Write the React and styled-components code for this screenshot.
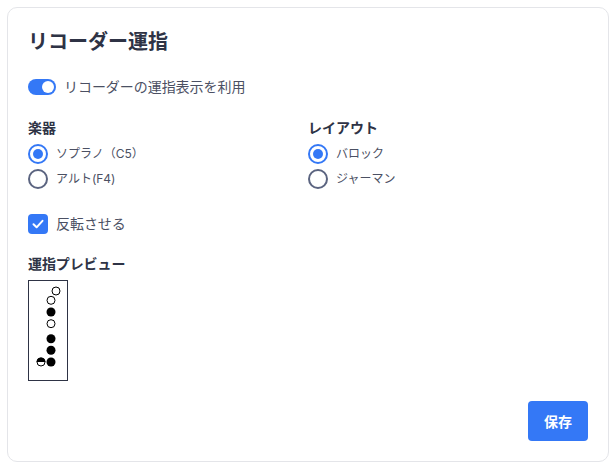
import React from "react";
import styled, { createGlobalStyle } from "styled-components";

const Global = createGlobalStyle`
  html, body { margin: 0; padding: 0; background: #fff; }
  body { font-family: Inter, "Noto Sans CJK JP", sans-serif; color: #2e3345; }
`;
const Page = styled.div`
  padding: 7px 7px 6px 7px;
  width: 616px;
  height: 468px;
  box-sizing: border-box;
`;
const Card = styled.div`
  box-sizing: border-box;
  width: 602px;
  height: 455px;
  border: 1px solid #e4e5e9;
  border-radius: 10px;
  padding: 20px;
  display: flex;
  flex-direction: column;
`;
const Title = styled.h2`
  margin: 0;
  font-size: 20px;
  line-height: 28px;
  font-weight: 700;
  color: #2e3345;
`;
const ToggleRow = styled.div`
  display: flex;
  align-items: center;
  gap: 8px;
  margin-top: 19px;
  height: 24px;
`;
const Track = styled.span`
  width: 28px;
  height: 16px;
  border-radius: 8px;
  background: #3478f6;
  display: flex;
  align-items: center;
  justify-content: flex-end;
  padding: 0 2px;
  box-sizing: border-box;
`;
const Knob = styled.span`
  width: 12px;
  height: 12px;
  border-radius: 50%;
  background: #fff;
`;
const OptionText = styled.span`
  font-size: 14px;
  line-height: 20px;
  letter-spacing: -0.05px;
  color: #4b5063;
`;
const Columns = styled.div`
  display: grid;
  grid-template-columns: 280px 1fr;
  margin-top: 19px;
`;
const Group = styled.div`
  display: flex;
  flex-direction: column;
`;
const GroupLabel = styled.div`
  font-size: 14px;
  line-height: 20px;
  font-weight: 700;
  color: #2e3345;
  margin-bottom: 3px;
`;
const RadioRow = styled.div`
  display: flex;
  align-items: center;
  gap: 8px;
  height: 25px;
`;
const RadioDot = styled.span`
  box-sizing: border-box;
  width: 20px;
  height: 20px;
  border-radius: 50%;
  border: 2px solid ${p => (p.$on ? "#3478f6" : "#5b6480")};
  display: flex;
  align-items: center;
  justify-content: center;
  &::after {
    content: "";
    width: 10px;
    height: 10px;
    border-radius: 50%;
    background: ${p => (p.$on ? "#3478f6" : "transparent")};
  }
`;
const SmallText = styled.span`
  font-size: 12px;
  line-height: 18px;
  color: #4b5063;
`;
const CheckRow = styled.div`
  display: flex;
  align-items: center;
  gap: 8px;
  margin-top: 23px;
  height: 20px;
`;
const CheckBox = styled.span`
  width: 20px;
  height: 20px;
  border-radius: 4px;
  background: #3478f6;
  display: flex;
  align-items: center;
  justify-content: center;
`;
const PreviewLabel = styled(GroupLabel)`
  margin-top: 20px;
  margin-bottom: 6px;
  letter-spacing: -0.1px;
`;
const Diagram = styled.svg`
  display: block;
  width: 40px;
  height: 101px;
`;
const Footer = styled.div`
  margin-top: auto;
  display: flex;
  justify-content: flex-end;
`;
const SaveButton = styled.button`
  width: 60px;
  height: 40px;
  border: 0;
  border-radius: 4px;
  background: #3478f6;
  color: #fff;
  font: 700 14px Inter, "Noto Sans CJK JP", sans-serif;
  padding: 0;
`;

const Radio = ({ on, children }) => (
  <RadioRow>
    <RadioDot $on={on} />
    <SmallText>{children}</SmallText>
  </RadioRow>
);

const holes = [
  [28, 11, false],
  [23, 20.3, false],
  [23, 32, true],
  [23, 43.7, false],
  [23, 58.7, true],
  [23, 70.3, true],
  [23, 82, true],
];

export default function App() {
  return (
    <Page>
      <Global />
      <Card>
        <Title>リコーダー運指</Title>
        <ToggleRow>
          <Track><Knob /></Track>
          <OptionText>リコーダーの運指表示を利用</OptionText>
        </ToggleRow>
        <Columns>
          <Group>
            <GroupLabel>楽器</GroupLabel>
            <Radio on>ソプラノ（C5）</Radio>
            <Radio>アルト(F4)</Radio>
          </Group>
          <Group>
            <GroupLabel>レイアウト</GroupLabel>
            <Radio on>バロック</Radio>
            <Radio>ジャーマン</Radio>
          </Group>
        </Columns>
        <CheckRow>
          <CheckBox>
            <svg width="14" height="14" viewBox="0 0 14 14" fill="none">
              <path d="M2.5 7.3 5.6 10.3 11.5 3.8" stroke="#fff" strokeWidth="2" strokeLinecap="round" strokeLinejoin="round" />
            </svg>
          </CheckBox>
          <OptionText>反転させる</OptionText>
        </CheckRow>
        <PreviewLabel>運指プレビュー</PreviewLabel>
        <Diagram viewBox="0 0 40 101">
          <rect x="0.5" y="0.5" width="39" height="100" fill="#fff" stroke="#2e3345" />
          {holes.map(([x, y, filled], i) => (
            <circle key={i} cx={x} cy={y} r={filled ? 4.5 : 4} fill={filled ? "#000" : "#fff"} stroke="#000" strokeWidth={filled ? 0 : 1} />
          ))}
          <circle cx="13" cy="82" r="4" fill="#fff" stroke="#000" />
          <path d="M8.5 82a4.5 4.5 0 0 1 9 0z" fill="#000" />
        </Diagram>
        <Footer>
          <SaveButton>保存</SaveButton>
        </Footer>
      </Card>
    </Page>
  );
}
